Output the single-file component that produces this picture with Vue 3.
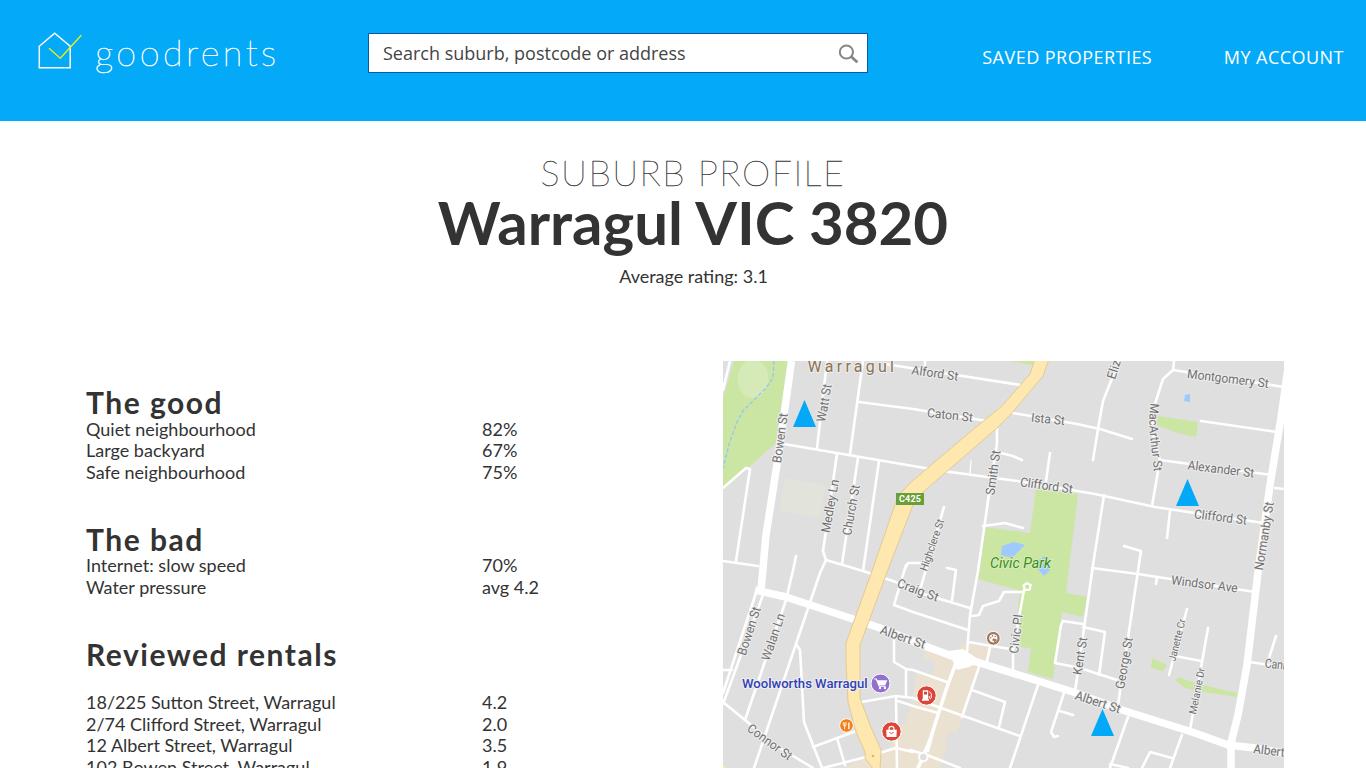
<script setup>
const sections = [
  { title: 'The good', key: 'good', rows: [['Quiet neighbourhood', '82%'], ['Large backyard', '67%'], ['Safe neighbourhood', '75%']] },
  { title: 'The bad', key: 'bad', rows: [['Internet: slow speed', '70%'], ['Water pressure', 'avg 4.2']] },
  { title: 'Reviewed rentals', key: 'rentals', rows: [['18/225 Sutton Street, Warragul', '4.2'], ['2/74 Clifford Street, Warragul', '2.0'], ['12 Albert Street, Warragul', '3.5'], ['102 Bowen Street, Warragul', '1.9']] },
]

const parks = [
  '734,361 788,361 776,443 723,490 723,398',
  '985,527 1030,533 1036,489 1078,494 1066,593 1087,597 1083,617 1062,612 1053,679 1028,672 1031,648 1020,647 1018,605 1021,591 978,579',
  '1010,361 1035,361 1033,365',
  '1158,416 1198,422 1196,437 1178,433 1157,425',
  '1152,658 1167,665 1163,671 1151,668',
  '1175,680 1178,677 1198,684 1237,693 1237,697 1210,693 1185,688',
]
const waters = [
  '1002,546 1014,542 1025,545 1012,558 1001,555',
  '1037,561 1045,556 1050,561 1050,570 1044,576 1037,568',
  '1185,395 1190,394 1190,402 1184,401',
]
const roads = [
  '730,361 723,390', '723,488 746,468 750,469 736,561', '723,561 758,566',
  '784,444 913,466 943,471 1017,481 1077,491 1095,494 1155,507 1195,513 1264,523',
  '827,361 817,448', '863,361 850,454', '859,402 913,409 987,421', '885,364 1020,385', '925,361 925,366',
  '837,454 823,551 826,560 820,573 798,638 754,768', '826,560 863,571 896,582 910,590 970,608',
  '858,458 842,564', '879,461 863,571', '796,556 794,566 786,600 745,720',
  '904,571 908,563 920,563', '944,507 920,590', '947,568 956,570 952,600', '906,565 894,605 913,612 968,630',
  '997,428 997,444 989,494 978,571 970,615 967,652', '1001,453 1013,456 1022,460', '1050,453 1046,481',
  '1013,413 1077,424 1100,429 1132,439', '1119,361 1103,401 1098,429 1093,460',
  '1104,495 1093,565 1075,692', '983,526 1005,523 1023,528', '1092,568 1138,574 1255,592', '1157,577 1156,584',
  '1174,361 1173,370 1163,379 1155,404 1152,430 1160,460 1152,506', '1173,370 1284,387', '1201,421 1277,432',
  '1160,460 1272,475', '1275,488 1284,489', '1170,511 1167,538', '1124,546 1141,551 1138,571 1118,705',
  '756,593 723,693', '763,595 723,704', '723,670 732,670', '723,702 745,720 775,745 813,768',
  '796,644 800,650 804,722 822,768', '813,747 856,731', '837,738 845,765', '823,768 866,757 896,748 913,752',
  '861,702 896,696 913,698 941,708 1020,736', '896,698 897,768', '898,701 913,706 938,713',
  '894,640 894,662 906,669 913,670 947,682', '906,670 906,696',
  '979,667 962,717', '972,690 1005,702 999,727', '1038,685 1010,768', '1064,693 1051,732 1054,737 1058,736', '1060,711 1073,715',
  '910,750 927,755 960,768', '932,736 928,751', '972,616 979,615 983,606 999,601 1004,592 1022,592',
  '1024,590 1013,650 1013,672', '968,642 1010,649', '990,647 987,661',
  '1055,663 1061,625 1063,621 1083,624', '1083,627 1105,632 1099,675', '1055,663 1080,668 1117,680',
  '1187,609 1169,675', '1175,656 1201,661', '1208,628 1190,730', '1182,735 1170,768', '1172,758 1150,752 1142,768',
  '1128,717 1110,768', '1110,764 1128,768', '1249,662 1284,667', '1276,636 1269,658',
]

const labels = [
  { t: 'Alford St', x: 935, y: 373, r: 8, l: 47 }, { t: 'Caton St', x: 950, y: 415, r: 6, l: 46 },
  { t: 'Ista St', x: 1048, y: 419, r: 6, l: 34 }, { t: 'Watt St', x: 824, y: 403, r: -80, l: 38 },
  { t: 'Bowen St', x: 780, y: 438, r: -82, l: 50 }, { t: 'Medley Ln', x: 830, y: 506, r: -80, l: 54 },
  { t: 'Church St', x: 851, y: 510, r: -80, l: 51 }, { t: 'Smith St', x: 993, y: 472.5, r: -82, l: 45 },
  { t: 'Clifford St', x: 1046.5, y: 485.5, r: 8, l: 53 }, { t: 'Highclere St', x: 932, y: 545, r: -71, l: 54, s: 11 },
  { t: 'Craig St', x: 918, y: 590, r: 20, l: 43 }, { t: 'Montgomery St', x: 1228, y: 378.5, r: 7, l: 82 },
  { t: 'Alexander St', x: 1221, y: 469, r: 7, l: 67 }, { t: 'Clifford St', x: 1220.5, y: 517, r: 7, l: 53 },
  { t: 'Normanby St', x: 1264, y: 536, r: -81, l: 69 }, { t: 'Windsor Ave', x: 1204.5, y: 584, r: 7, l: 67 },
  { t: 'Albert St', x: 903, y: 637, r: 19, l: 47 }, { t: 'Albert St', x: 1098, y: 702, r: 18, l: 47 },
  { t: 'Janette Cr', x: 1177, y: 640, r: -76, l: 43, s: 10.5 }, { t: 'Melanie Dr', x: 1197, y: 691, r: -79, l: 47, s: 10.5 },
  { t: 'George St', x: 1124, y: 663, r: -80, l: 52 }, { t: 'Kent St', x: 1080, y: 656, r: -81, l: 38 },
  { t: 'Civic Pl', x: 1016, y: 634, r: -83, l: 39 }, { t: 'Bowen St', x: 749, y: 631, r: -72, l: 50 },
  { t: 'Walan Ln', x: 773, y: 637, r: -71, l: 49 }, { t: 'Connor St', x: 770, y: 742, r: 36, l: 52 },
]
const markers = ['804.5,400 816,427 793,427', '1187.5,479 1199,506 1176,506', '1102.5,709 1114,736 1091,736']
</script>

<template>
  <div class="page">
    <header class="bar">
      <a class="brand">
        <svg class="house" width="46" height="38" viewBox="37 32 46 38" fill="none" stroke-width="1.5">
          <path d="M39.3 46.3 54.7 33.3 70.2 46.3V67.7H39.3Z" stroke="#fff" />
          <path d="M49 48.3 60.3 58.3 81.3 35.3" stroke="#e6ea1c" />
        </svg>
        <span class="wordmark">goodrents</span>
      </a>
      <div class="search">
        <span>Search suburb, postcode or address</span>
        <svg width="22" height="22" viewBox="0 0 22 22" fill="none" stroke="#858585">
          <circle cx="9.4" cy="9" r="6.6" stroke-width="2" />
          <path d="M14 13.5 20.4 19.3" stroke-width="2.8" />
        </svg>
      </div>
      <nav class="links"><a>SAVED PROPERTIES</a><a>MY ACCOUNT</a></nav>
    </header>

    <section class="hero">
      <p class="eyebrow">SUBURB PROFILE</p>
      <h1>Warragul VIC 3820</h1>
      <p class="rating">Average rating: 3.1</p>
    </section>

    <main class="content">
      <div class="facts">
        <section v-for="s in sections" :key="s.key" :class="['block', s.key]">
          <h2>{{ s.title }}</h2>
          <dl>
            <div v-for="row in s.rows" :key="row[0]" class="row"><dt>{{ row[0] }}</dt><dd>{{ row[1] }}</dd></div>
          </dl>
        </section>
      </div>

      <svg class="map" width="561" height="407" viewBox="723 361 561 407">
        <rect x="723" y="361" width="561" height="407" fill="#dfdfdf" />
        <polygon points="785,478 825,485 820,518 779,511" fill="#e2e3db" />
        <polygon points="960,643 994,647 987,662 979,668 962,717 957,733 950,732 945,745 947,747 940,768 843,768 866,757 890,748 898,728 906,722 910,708 912,700 917,673 932,677 935,662 923,658 925,650 957,657" fill="#ebe1d1" />
        <polygon v-for="p in parks" :key="p" :points="p" fill="#cae6a2" />
        <ellipse cx="753" cy="379" rx="15.5" ry="19" fill="#d6eab8" />
        <polyline points="774,361 773,378 766,388 743,411 737,422 730,441 723,468" class="creek" />
        <polygon v-for="p in waters" :key="p" :points="p" fill="#a0caff" />

        <g class="roads">
          <polyline v-for="(r, i) in roads" :key="i" :points="r" />
          <polyline points="971,461 970,473" class="lane" />
          <polyline points="957,660 946,690 930,740 923,757 918,768" class="mid" />
          <polyline points="791.5,361 778,458 766,535 761,590" class="main" />
          <polyline points="755,590 786,597 856,620 880,628 925,646 960,659 977,662 1038,681 1073,692 1122,710 1195,733 1228,745 1255,748 1284,753" class="main" />
          <polyline points="1289,361 1281,418 1270,485 1258,572 1247,665 1238,715 1231,743 1231,768" class="main" />
          <path d="M948 651 963 649 981 661 969 667 957 670Z" class="junction" />
          <circle cx="1231" cy="745" r="5.5" class="junction" />
        </g>
        <circle cx="923.3" cy="757" r="4.2" fill="#dfdfdf" stroke="#fff" stroke-width="2" />
        <path d="M1023.5 585.5 1027 583 1030.7 585 1029.7 589.5 1025 590Z" fill="#cae6a2" stroke="#fff" stroke-width="2.2" />
        <path d="M1035 359 1030 374 1002 406 970 432 910 483 898 496 872 571 846 643 846 662 848 702 856 732 865 752V758L874 770H880L881 750 870 725 860 698 860 645 889 567 913 505 922 493 997 428 1012 413 1043 376 1049 359Z" fill="#ffe8af" stroke="#e2ca94" />
        <circle cx="873" cy="756" r="1.2" fill="#d6b663" />
        <path d="M723 765 727 768H723Z" fill="#ffe8af" />

        <text x="807.5" y="371.5" textLength="86.5" class="town">Warragul</text>
        <g class="streets">
          <text v-for="(n, i) in labels" :key="i" :x="n.x" :y="n.y" :dy="(n.s || 12.8) * 0.35" :font-size="n.s || 12.8" :textLength="n.l" lengthAdjust="spacingAndGlyphs" :transform="`rotate(${n.r} ${n.x} ${n.y})`" text-anchor="middle">{{ n.t }}</text>
          <text x="1115" y="380" transform="rotate(-72 1115 380)" font-size="12.8" textLength="66" lengthAdjust="spacingAndGlyphs">Elizabeth St</text>
          <text x="1253" y="753" transform="rotate(7 1253 753)" font-size="12.8" textLength="45" lengthAdjust="spacingAndGlyphs">Albert St</text>
          <text x="1264.5" y="667.5" transform="rotate(6 1264.5 667.5)" font-size="12.8" textLength="36" lengthAdjust="spacingAndGlyphs">Cann St</text>
          <path id="macarthur" d="M1150.5 403C1147 430 1152 445 1154 473" fill="none" stroke="none" />
          <text font-size="12.4"><textPath href="#macarthur" textLength="69" lengthAdjust="spacingAndGlyphs">MacArthur St</textPath></text>
        </g>
        <text x="990" y="567.7" textLength="61" lengthAdjust="spacingAndGlyphs" class="park">Civic Park</text>
        <text x="742" y="687.5" textLength="125.5" lengthAdjust="spacingAndGlyphs" class="shop">Woolworths Warragul</text>
        <rect x="896" y="493" width="28" height="12" fill="#689f38" />
        <text x="899" y="502.4" textLength="22" class="route">C425</text>

        <g class="poi">
          <circle cx="880.5" cy="683.5" r="9.5" fill="#9370cf" />
          <circle cx="846.5" cy="725.5" r="6.8" fill="#f57f17" />
          <circle cx="891.5" cy="731.5" r="9.7" fill="#db4437" />
          <circle cx="926.5" cy="695.5" r="9.7" fill="#db4437" />
          <circle cx="993.3" cy="638.3" r="6.9" fill="#a0785c" />
        </g>
        <g fill="none" stroke="#fff" stroke-width="1.2">
          <path d="M874 679h2.3l2.9 7.2h6.3" />
          <path d="M843.3 722.3v2.2q0 1.4 1.4 1.4t1.4-1.4v-2.2M844.7 722.3v7" stroke-width=".9" />
          <path d="M848.9 729.3v-6.8" stroke-width="1.4" />
          <path d="M889 730v-1.2a2.5 2.5 0 0 1 5 0v1.2" />
          <path d="M929 691.5 931.3 693.5V698q-1 1.8-2 0V696" stroke-width="1" />
        </g>
        <g fill="#fff">
          <path d="M877 680.3H887.3l-2 4.7h-6.2Z" />
          <circle cx="880" cy="688" r="1.2" /><circle cx="885" cy="688" r="1.2" />
          <path d="M886.2 729.7h10.6l-.4 7.3h-9.8Z" />
          <path d="M922.8 690.3h5.4v9h.8v1.4h-7v-1.4h.8Z" />
          <circle cx="993.3" cy="638.3" r="4.1" />
        </g>
        <path d="M889.3 732.2q2.2 2.8 4.4 0" fill="none" stroke="#db4437" />
        <rect x="924" y="691.7" width="3" height="2.8" fill="#db4437" />
        <g fill="#a0785c"><circle cx="990.8" cy="637.8" r=".8" /><circle cx="992.5" cy="635.9" r=".8" /><circle cx="995.2" cy="636.5" r=".8" /><path d="M993 638.5q2.5-.5 4 1.5l-2.5 2.5q0-2-2.3-2Z" /></g>
        <polygon v-for="m in markers" :key="m" :points="m" fill="#03a9f6" />
      </svg>
    </main>
  </div>
</template>

<style>
html, body { margin: 0; height: 100%; overflow: hidden; background: #fff; }
</style>

<style scoped>
.page { height: 768px; overflow: hidden; display: flex; flex-direction: column; background: #fff; color: #333; font-family: Lato, sans-serif; font-size: 18px; line-height: 21.7px; }
.bar { height: 121px; flex: none; box-sizing: border-box; padding: 32px 22px 0 37px; display: flex; align-items: flex-start; background: #04a9f8; color: #fff; }
.brand { display: flex; width: 331px; }
.house { flex: none; }
.wordmark { margin: -1px 0 0 12px; font-weight: 200; font-size: 36px; line-height: 42px; letter-spacing: 3.5px; -webkit-text-stroke: 0.6px #fff; }
.search { box-sizing: border-box; width: 500px; height: 40px; margin-top: 1px; padding: 2px 8px 0 14px; border: 1px solid #0a5a9c; background: #fff; color: #444; display: flex; align-items: center; justify-content: space-between; font-family: "Open Sans", sans-serif; font-size: 18px; }
.links { margin: 15px 0 0 auto; display: flex; gap: 71.5px; font-family: "Open Sans", sans-serif; font-size: 18px; letter-spacing: 0.47px; white-space: nowrap; }
.hero { height: 240px; flex: none; box-sizing: border-box; padding: 30px 0 0 20px; text-align: center; }
.eyebrow { margin: 0; font-weight: 200; font-size: 36px; line-height: 43px; letter-spacing: 1.45px; -webkit-text-stroke: 0.35px #333; }
h1 { margin: -2px 0 0; font-size: 60px; line-height: 60px; font-weight: 700; }
.rating { margin: 14px 0 0; padding-left: 1px; }
.content { display: flex; justify-content: space-between; padding: 0 82px 0 86px; }
.facts { width: 500px; padding-top: 23px; }
h2 { margin: 0; font-size: 30px; line-height: 36px; font-weight: 700; letter-spacing: 1.5px; }
dl, dd { margin: 0; }
dl { margin-top: -1.5px; }
.block { margin-bottom: 37.2px; }
.rentals dl { margin-top: 20px; }
.row { display: grid; grid-template-columns: 396px 1fr; white-space: nowrap; }
.map { flex: none; display: block; font-family: Roboto, sans-serif; }
.creek { fill: none; stroke: #94c4fa; stroke-width: 1.3; stroke-dasharray: 4 2; }
.roads polyline { fill: none; stroke: #fff; stroke-width: 2.6; stroke-linejoin: round; stroke-linecap: round; }
.roads .lane { stroke-width: 1.3; }
.roads .mid { stroke-width: 3.6; }
.roads .main { stroke-width: 7.5; stroke-linecap: butt; }
.junction { fill: #fff; }
.streets { fill: #707070; stroke: #eee; stroke-width: 2px; paint-order: stroke; stroke-linejoin: round; }
.town { font-size: 16px; fill: #8a7452; stroke: #eee; stroke-width: 2px; paint-order: stroke; }
.park { font-size: 14px; font-style: italic; fill: #3b8a1e; stroke: #d9f0bd; stroke-width: 1.5px; paint-order: stroke; }
.shop { font-size: 13px; font-weight: 500; fill: #3341b8; stroke: #eee; stroke-width: 2px; paint-order: stroke; }
.route { font-size: 9px; font-weight: 700; fill: #fff; }
.poi { stroke: #fff; stroke-width: 1; }
</style>
